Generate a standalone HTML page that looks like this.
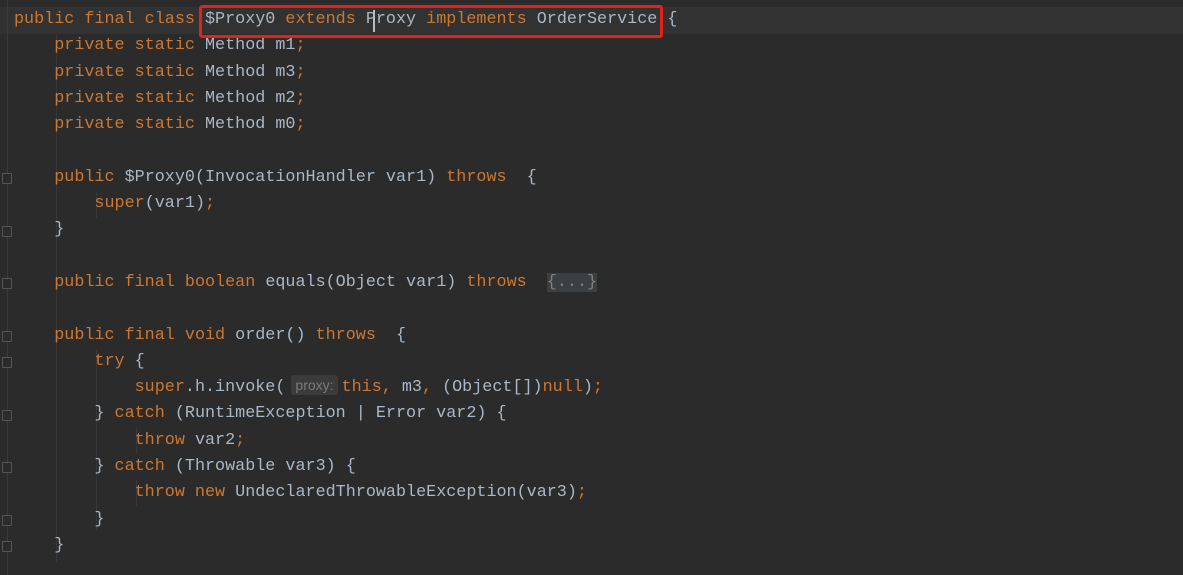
<!DOCTYPE html>
<html><head><meta charset="utf-8"><style>
html,body{margin:0;padding:0;background:#2b2b2b;width:1183px;height:575px;overflow:hidden}
.code{position:absolute;left:14px;top:7px;font-family:"Liberation Mono","DejaVu Sans Mono",monospace;font-size:16.75px;color:#a9b7c6}
.l{height:26.3px;line-height:26.3px;white-space:pre}
.k{color:#cc7832}
.hint{display:inline-block;background:#3b3b3b;color:#7a7a7a;font-family:"Liberation Sans",sans-serif;font-size:14px;line-height:20px;padding:0 4px;margin:0 4px 0 6px;border-radius:3px;vertical-align:1px}
.fold{background:#3c3f41;color:#808080}
.cur{position:absolute;left:0;top:7px;width:1183px;height:27px;background:#323232}
.box{position:absolute;left:199px;top:5px;width:458px;height:27px;border:3px solid #e3221c;border-radius:3px}
.gut{position:absolute;left:7px;top:0;width:1px;height:575px;background:#3a3a3a}
.ig{position:absolute;width:1px;background:#373737}
.fm{position:absolute;left:2px;width:8px;height:9px;border:1px solid #555;border-radius:1px;background:#2b2b2b}
</style></head><body>
<div class="cur"></div>
<div class="gut"></div>
<div class="ig" style="left:56px;top:34px;height:528px"></div>
<div class="ig" style="left:96px;top:192px;height:26px"></div>
<div class="ig" style="left:96px;top:350px;height:180px"></div>
<div class="ig" style="left:136px;top:428px;height:26px"></div>
<div class="ig" style="left:136px;top:480px;height:26px"></div>
<div class="fm" style="top:173px"></div>
<div class="fm" style="top:226px"></div>
<div class="fm" style="top:278px"></div>
<div class="fm" style="top:331px"></div>
<div class="fm" style="top:357px"></div>
<div class="fm" style="top:410px"></div>
<div class="fm" style="top:462px"></div>
<div class="fm" style="top:515px"></div>
<div class="fm" style="top:541px"></div>
<div class="code"><div class="l"><span class="k">public final class </span>$Proxy0 <span class="k">extends </span>Proxy <span class="k">implements </span>OrderService {</div><div class="l">    <span class="k">private static </span>Method m1<span class="k">;</span></div><div class="l">    <span class="k">private static </span>Method m3<span class="k">;</span></div><div class="l">    <span class="k">private static </span>Method m2<span class="k">;</span></div><div class="l">    <span class="k">private static </span>Method m0<span class="k">;</span></div><div class="l"> </div><div class="l">    <span class="k">public </span>$Proxy0(InvocationHandler var1) <span class="k">throws </span> {</div><div class="l">        <span class="k">super</span>(var1)<span class="k">;</span></div><div class="l">    }</div><div class="l"> </div><div class="l">    <span class="k">public final boolean </span>equals(Object var1) <span class="k">throws </span> <span class="fold">{...}</span></div><div class="l"> </div><div class="l">    <span class="k">public final void </span>order() <span class="k">throws </span> {</div><div class="l">        <span class="k">try </span>{</div><div class="l">            <span class="k">super</span>.h.invoke(<span class="hint">proxy:</span><span class="k">this, </span>m3<span class="k">, </span>(Object[])<span class="k">null</span>)<span class="k">;</span></div><div class="l">        } <span class="k">catch </span>(RuntimeException | Error var2) {</div><div class="l">            <span class="k">throw </span>var2<span class="k">;</span></div><div class="l">        } <span class="k">catch </span>(Throwable var3) {</div><div class="l">            <span class="k">throw new </span>UndeclaredThrowableException(var3)<span class="k">;</span></div><div class="l">        }</div><div class="l">    }</div></div>
<div class="box"></div>
<div style="position:absolute;left:373px;top:10px;width:2px;height:22px;background:#bbb"></div>
</body></html>
